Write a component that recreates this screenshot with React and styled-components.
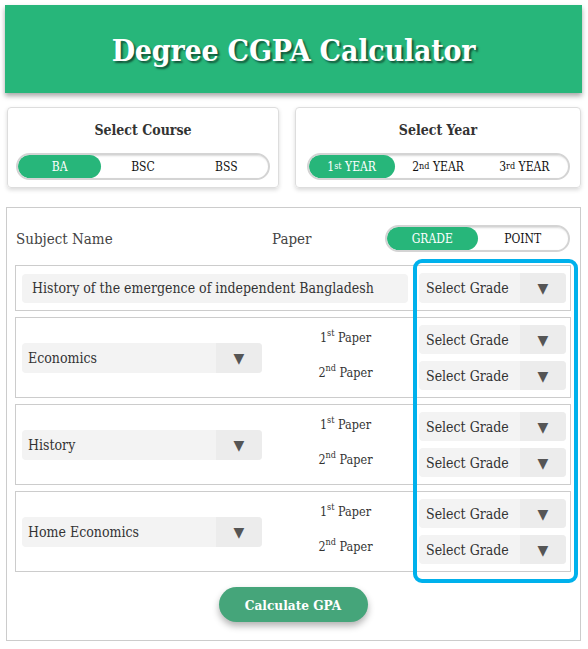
import React from "react";
import styled, { createGlobalStyle } from "styled-components";

const Global = createGlobalStyle`
  html, body { margin: 0; padding: 0; background: #fff; }
  body { font-family: "DejaVu Serif", "Liberation Serif", serif; color: #333; }
  * { box-sizing: border-box; }
`;

const Page = styled.div`
  width: 588px;
  padding: 5px 6px 0 5px;
`;

const Header = styled.header`
  height: 88px;
  width: 577px;
  background: #27b67a;
  box-shadow: 0 3px 5px rgba(0, 0, 0, 0.35);
  display: flex;
  align-items: center;
  justify-content: center;
`;

const Title = styled.h1`
  margin: 0;
  font-size: 30px;
  font-weight: bold;
  font-stretch: semi-condensed;
  color: #fff;
  text-shadow: 2px 2px 2px rgba(0, 0, 0, 0.55);
  letter-spacing: -0.2px;
  padding-top: 2px;
`;

const TopRow = styled.div`
  display: grid;
  grid-template-columns: 272px 286px;
  column-gap: 16px;
  margin: 14px 0 0 2px;
`;

const Card = styled.section`
  height: 81px;
  border: 1px solid #ddd;
  border-radius: 4px;
  box-shadow: 0 2px 4px rgba(0, 0, 0, 0.15);
  padding: 12px 9px 0;
  display: flex;
  flex-direction: column;
  align-items: center;
`;

const CardTitle = styled.div`
  font-size: 14px;
  font-weight: bold;
  font-stretch: semi-condensed;
  color: #333;
  height: 20px;
  line-height: 20px;
`;

const Toggle = styled.div`
  margin-top: ${(p) => p.$mt ?? 13}px;
  width: ${(p) => p.$w}px;
  height: 27px;
  border: 2px solid #d4d4d4;
  border-radius: 14px;
  box-shadow: inset 1px 1px 2px rgba(0, 0, 0, 0.15);
  display: grid;
  grid-template-columns: repeat(${(p) => p.$n}, 1fr);
  overflow: hidden;
  background: #fff;
`;

const ToggleItem = styled.div`
  display: flex;
  align-items: center;
  justify-content: center;
  font-size: 12px;
  font-stretch: semi-condensed;
  color: ${(p) => (p.$active ? "#fff" : "#111")};
  background: ${(p) => (p.$active ? "#27b67a" : "transparent")};
  border-radius: 12px;
  white-space: nowrap;
  sup { font-size: 9px; line-height: 0; position: relative; top: -1px; }
`;

const Main = styled.section`
  position: relative;
  margin: 19px 0 0 1px;
  width: 575px;
  border: 1px solid #ccc;
  padding: 17px 9px 18px 8px;
  display: flex;
  flex-direction: column;
`;

const HeadRow = styled.div`
  display: flex;
  align-items: center;
  height: 27px;
  margin-bottom: 13px;
`;

const HeadLabel = styled.div`
  font-size: 15px;
  font-stretch: semi-condensed;
  color: #444;
  padding-left: 1px;
  width: ${(p) => p.$w || "auto"};
`;

const Rows = styled.div`
  display: flex;
  flex-direction: column;
  gap: 6px;
`;

const Row = styled.div`
  border: 1px solid #ccc;
  padding: 7px 4px 7px 6px;
  display: grid;
  grid-template-columns: 240px 1fr 147px;
  align-items: center;
`;

const SubjectBox = styled.div`
  grid-column: 1 / 3;
  margin-right: 11px;
  height: 29px;
  background: #f3f3f3;
  border-radius: 4px;
  display: flex;
  align-items: center;
  padding-left: 10px;
  font-size: 14px;
  font-stretch: semi-condensed;
  color: #333;
  white-space: nowrap;
`;

const Select = styled.div`
  height: ${(p) => p.$h || 29}px;
  background: #f3f3f3;
  border-radius: 4px;
  display: flex;
  align-items: stretch;
  overflow: hidden;
`;

const SelectText = styled.div`
  flex: 1;
  display: flex;
  align-items: center;
  padding-left: ${(p) => p.$pl || 7}px;
  font-size: 14px;
  font-stretch: semi-condensed;
  color: #333;
  white-space: nowrap;
`;

const Arrow = styled.div`
  width: 46px;
  background: #ececec;
  display: flex;
  align-items: center;
  justify-content: center;
  color: #555;
  font-size: 14px;
`;

const PaperCol = styled.div`
  display: flex;
  flex-direction: column;
  align-items: center;
  gap: 20px;
  padding-left: 10px;
  margin-top: -5px;
  font-size: 12.5px;
  font-stretch: semi-condensed;
  color: #333;
  sup { font-size: 9px; line-height: 0; position: relative; top: -1px; }
`;

const GradeCol = styled.div`
  display: flex;
  flex-direction: column;
  gap: 7px;
`;

const Footer = styled.div`
  display: flex;
  justify-content: center;
  margin-top: 15px;
`;

const Button = styled.button`
  width: 149px;
  height: 35px;
  border: none;
  border-radius: 18px;
  background: #45a57a;
  color: #fff;
  font-family: inherit;
  font-size: 13.5px;
  font-weight: bold;
  font-stretch: semi-condensed;
  box-shadow: 0 4px 7px rgba(0, 0, 0, 0.3);
`;

const Highlight = styled.div`
  position: absolute;
  left: 406px;
  top: 51px;
  width: 165px;
  height: 324px;
  border: 4px solid #00b1ec;
  border-radius: 9px;
  pointer-events: none;
`;

const GradeSelect = ({ h }) => (
  <Select $h={h}>
    <SelectText>Select Grade</SelectText>
    <Arrow>▼</Arrow>
  </Select>
);

const subjects = ["Economics", "History", "Home Economics"];

export default function App() {
  return (
    <Page>
      <Global />
      <Header>
        <Title>Degree CGPA Calculator</Title>
      </Header>
      <TopRow>
        <Card>
          <CardTitle>Select Course</CardTitle>
          <Toggle $w={254} $n={3}>
            <ToggleItem $active>BA</ToggleItem>
            <ToggleItem>BSC</ToggleItem>
            <ToggleItem>BSS</ToggleItem>
          </Toggle>
        </Card>
        <Card>
          <CardTitle>Select Year</CardTitle>
          <Toggle $w={263} $n={3}>
            <ToggleItem $active>1<sup>st</sup>&nbsp;YEAR</ToggleItem>
            <ToggleItem>2<sup>nd</sup>&nbsp;YEAR</ToggleItem>
            <ToggleItem>3<sup>rd</sup>&nbsp;YEAR</ToggleItem>
          </Toggle>
        </Card>
      </TopRow>
      <Main>
        <HeadRow>
          <HeadLabel $w="256px">Subject Name</HeadLabel>
          <HeadLabel $w="114px">Paper</HeadLabel>
          <Toggle $w={185} $n={2} $mt={0}>
            <ToggleItem $active>GRADE</ToggleItem>
            <ToggleItem>POINT</ToggleItem>
          </Toggle>
        </HeadRow>
        <Rows>
          <Row>
            <SubjectBox>History of the emergence of independent Bangladesh</SubjectBox>
            <GradeSelect h={30} />
          </Row>
          {subjects.map((s) => (
            <Row key={s}>
              <Select $h={30}>
                <SelectText $pl={6}>{s}</SelectText>
                <Arrow>▼</Arrow>
              </Select>
              <PaperCol>
                <div>1<sup>st</sup> Paper</div>
                <div>2<sup>nd</sup> Paper</div>
              </PaperCol>
              <GradeCol>
                <GradeSelect />
                <GradeSelect />
              </GradeCol>
            </Row>
          ))}
        </Rows>
        <Footer>
          <Button>Calculate GPA</Button>
        </Footer>
        <Highlight />
      </Main>
    </Page>
  );
}
